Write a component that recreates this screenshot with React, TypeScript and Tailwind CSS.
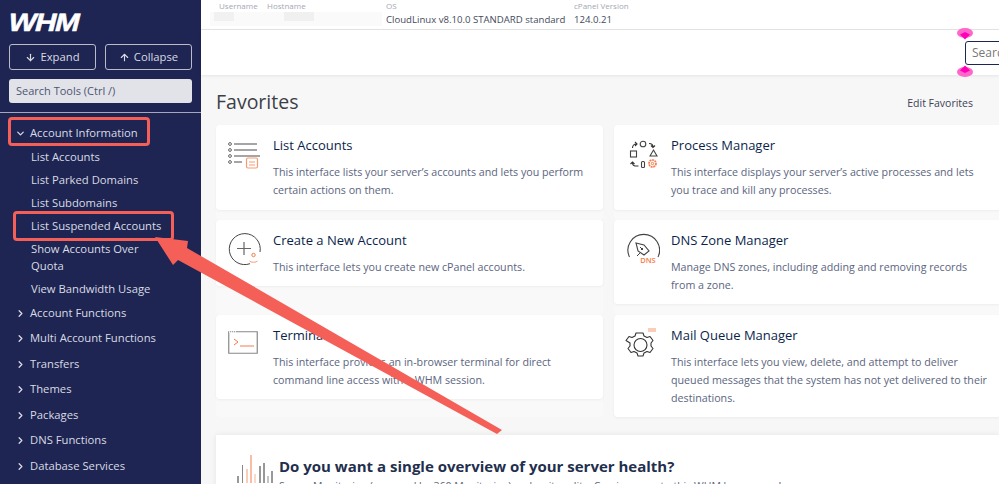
import { ArrowDown, ArrowUp, ChevronDown, ChevronRight } from 'lucide-react';
import type { ReactNode } from 'react';

const subItems = [
  { label: 'List Accounts' },
  { label: 'List Parked Domains' },
  { label: 'List Subdomains' },
  { label: 'List Suspended Accounts' },
  { label: 'Show Accounts Over Quota' },
  { label: 'View Bandwidth Usage' },
];

const groups = [
  'Account Functions',
  'Multi Account Functions',
  'Transfers',
  'Themes',
  'Packages',
  'DNS Functions',
  'Database Services',
];

function ListIcon() {
  return (
    <svg className="mt-[3px]" width="32" height="30" viewBox="0 0 32 30" fill="none">
      {[3, 9, 15, 21].map(y => (
        <circle key={y} cx="2" cy={y} r="1.4" stroke="#666" strokeWidth="1" />
      ))}
      <path d="M6 3h23M6 9h23M6 15h26M6 21h8" stroke="#888" strokeWidth="1.5" />
      <rect x="18.5" y="17" width="11" height="10" rx="1.5" fill="#fff" stroke="#f79a70" strokeWidth="1.2" />
      <path d="M21 21h6M21 24h6" stroke="#f79a70" strokeWidth="1" />
    </svg>
  );
}

function PlusIcon() {
  return (
    <svg width="34" height="34" viewBox="0 0 34 34" fill="none">
      <path d="M22 30.7A15.5 15.5 0 1 1 32 19" stroke="#444" strokeWidth="1" />
      <path d="M16 9v13M9 15.5h14" stroke="#666" strokeWidth="1.2" />
      <circle cx="25.5" cy="22" r="1.7" stroke="#f47b4a" strokeWidth="1" />
      <path d="M21.5 28c1 1.7 7 1.7 8 0" stroke="#f79a70" strokeWidth="1" />
    </svg>
  );
}

function TerminalIcon() {
  return (
    <svg className="mt-[3px]" width="30" height="24" viewBox="0 0 30 24" fill="none">
      <path d="M.75.75h28.500v21.500H.75z" stroke="#888" strokeWidth="1.200" />
      <path d="M1 1h7" stroke="#fff" strokeWidth="1.500" strokeDasharray="1 1" />
      <path d="M6 8l4 3-4 3" stroke="#f47b4a" strokeWidth="1" />
      <path d="M12 15h14" stroke="#f47b4a" strokeWidth="1" />
    </svg>
  );
}

function ProcessIcon() {
  return (
    <svg className="ml-[3px] mt-[2px]" width="30" height="30" viewBox="0 0 30 30" fill="none">
      <circle cx="14" cy="4" r="2.800" stroke="#444" strokeWidth="1.100" />
      <rect x="1.500" y="11" width="6" height="6" stroke="#444" strokeWidth="1.100" />
      <path d="M21 16l3.500-6 3.500 6h-7z" stroke="#444" strokeWidth="1.100" />
      <rect x="12.500" y="21.500" width="3" height="6" rx="1" stroke="#444" strokeWidth="1.100" />
      <circle cx="23.500" cy="23.500" r="3.500" stroke="#f47b4a" strokeWidth="1.700" strokeDasharray="2 .6" />
      <circle cx="23.500" cy="23.500" r="1.200" stroke="#f47b4a" strokeWidth="1" />
      <path d="M3.500 8c0-2.500 1.500-4 4-4M6 2l2 2-2 2" stroke="#333" strokeWidth="1.100" />
      <path d="M20 3.500c2.500 0 4 1.500 4 3.500M22 5.500l2 2 2-2" stroke="#333" strokeWidth="1.100" />
      <path d="M9.500 26H6.500c-2 0-3-1-3-3.500M5.500 24l-2-2-2 2" stroke="#333" strokeWidth="1.100" />
    </svg>
  );
}

function DnsIcon() {
  return (
    <svg width="34" height="34" viewBox="0 0 34 34" fill="none">
      <path d="M3.500 24A15.800 15.800 0 1 1 32 24" stroke="#444" strokeWidth="1.100" />
      <path d="M10 10l8 2 5 6-5 4-6-4-2-8z" stroke="#444" strokeWidth="1.100" />
      <path d="M14 14l3 3M15 17l2-2M11 23l3-3" stroke="#444" strokeWidth="1" />
      <text x="22" y="30" textAnchor="middle" fontSize="7.500" fontWeight="600" fill="#f47b4a" fontFamily="'Open Sans', sans-serif">DNS</text>
    </svg>
  );
}

function MailGearIcon() {
  return (
    <svg className="-mt-[1px] ml-[-1px]" width="33" height="34" viewBox="0 0 33 34" fill="none">
      <path d="M23 2h8M23 4h8" stroke="#f79a70" strokeWidth="1" />
      <path d="M13 6h5l1 3 3 1.500 3-1 3 4-2 2.500v3l2 2.500-3 4-3-1-3 1.500-1 3h-5l-1-3-3-1.500-3 1-3-4 2-2.500v-3L1 13.500l3-4 3 1 3-1.500 1-3z" stroke="#333" strokeWidth="1.100" strokeLinejoin="round" />
      <circle cx="15.500" cy="18" r="6.500" stroke="#333" strokeWidth="1.100" />
    </svg>
  );
}

function BarsIcon() {
  const bars = [
    { x: 1, h: 7, c: '#333' }, { x: 5.5, h: 18, c: '#888' }, { x: 10, h: 14, c: '#f79a70' },
    { x: 14, h: 28, c: '#f47b4a' }, { x: 18, h: 9, c: '#f7b199' }, { x: 23, h: 17, c: '#333' },
    { x: 27, h: 20, c: '#333' }, { x: 31, h: 7, c: '#888' }, { x: 35, h: 12, c: '#333' },
  ];
  return (
    <svg width="37" height="28" viewBox="0 0 37 28" fill="none">
      {bars.map(b => (
        <path key={b.x} d={`M${b.x} 28v-${b.h}`} stroke={b.c} strokeWidth="1" />
      ))}
    </svg>
  );
}

function Card({ icon, title, children, cardH, whiteH }: { icon: ReactNode; title: string; children: ReactNode; cardH: string; whiteH: string }) {
  return (
    <div className={`bg-[#f9f9f9] rounded ${cardH}`}>
      <div className={`flex bg-white rounded shadow-[0_1px_3px_rgba(0,0,0,0.05)] ${whiteH}`}>
        <div className="w-[57px] shrink-0 pl-[12px] pt-[13px]">{icon}</div>
        <div className="pt-[10px] pr-[12px]">
          <h3 className="text-[13px] leading-[20px] text-[#0c1f4c] font-normal">{title}</h3>
          <p className="mt-[8px] text-[10.700px] leading-[18px] text-[#5b6580]">{children}</p>
        </div>
      </div>
    </div>
  );
}

export default function App() {
  return (
    <div className="relative flex h-[484px] w-[999px] overflow-hidden bg-[#f7f7f7] font-['Open_Sans',sans-serif]">
      <aside className="w-[201px] shrink-0 bg-[#1e2552] text-[#d9dbe4]">
        <div className="h-[44px] pl-[9px] pt-[7px]">
          <span className="block origin-left -skew-x-12 scale-x-[1.180] font-['Liberation_Sans',sans-serif] text-[25px] leading-[30px] font-bold tracking-[-1px] text-white [-webkit-text-stroke:0.5px_white]">WHM</span>
        </div>
        <div className="flex gap-[9px] px-[9px]">
          <button className="flex h-[26px] w-[87px] items-center justify-center gap-[4px] rounded-[3px] border border-[#b9bccb] text-[11.250px]">
            <ArrowDown size={11} strokeWidth={2.500} />Expand
          </button>
          <button className="flex h-[26px] w-[87px] items-center justify-center gap-[4px] rounded-[3px] border border-[#b9bccb] text-[11.250px]">
            <ArrowUp size={11} strokeWidth={2.500} />Collapse
          </button>
        </div>
        <div className="mx-[9px] mt-[9px] flex h-[24px] items-center rounded-[3px] bg-[#e2e3e8] px-[7px] text-[11px] text-[#4d5573]">
          Search Tools (Ctrl /)
        </div>
        <div className="mt-[9px] border-t border-[#a5a8ba]" />
        <nav className="pt-[8px] text-[11.250px]">
          <div className="flex h-[24px] items-center gap-[4px] pl-[15px]">
            <ChevronDown size={11} strokeWidth={2.750} />
            Account Information
          </div>
          <ul className="mb-[0.500px]">
            {subItems.map(item => (
              <li key={item.label} className="w-[165px] py-[3px] pl-[31px] leading-[17px]">{item.label}</li>
            ))}
          </ul>
          {groups.map(g => (
            <div key={g} className="flex h-[25.500px] items-center gap-[4px] pl-[15px]">
              <ChevronRight size={11} strokeWidth={2.750} />
              {g}
            </div>
          ))}
        </nav>
      </aside>

      <main className="min-w-0 flex-1">
        <div className="flex h-[30px] border-b border-[#e5e5e5] bg-white whitespace-nowrap">
          <div className="w-[18px]" />
          <div className="w-[48px] text-[8px] leading-[11px] text-[#a3a8b4]">Username</div>
          <div className="w-[119px] text-[8px] leading-[11px] text-[#a3a8b4]">Hostname</div>
          <div className="w-[188px]">
            <div className="text-[8px] leading-[11px] text-[#a3a8b4]">OS</div>
            <div className="mt-[1px] text-[9.600px] leading-[15px] text-[#444b5c]">CloudLinux v8.10.0 STANDARD standard</div>
          </div>
          <div>
            <div className="text-[8px] leading-[11px] text-[#a3a8b4]">cPanel Version</div>
            <div className="mt-[1px] text-[9.600px] leading-[15px] text-[#444b5c]">124.0.21</div>
          </div>
        </div>
        <div className="h-[45px] bg-white shadow-[0_1px_3px_rgba(0,0,0,0.08)]" />

        <div className="pl-[15px]">
          <div className="flex h-[50px] items-center justify-between pr-[26px] pt-[4px]">
            <h1 className="text-[19.500px] font-normal text-[#3c3f46]">Favorites</h1>
            <span className="mt-[4px] text-[10.500px] text-[#3a4256]">Edit Favorites</span>
          </div>
          <div className="grid grid-cols-[387px_387px] gap-x-[11px]">
            <Card cardH="h-[95px]" whiteH="h-[85px]" icon={<ListIcon />} title="List Accounts">
              This interface lists your server’s accounts and lets you perform certain actions on them.
            </Card>
            <Card cardH="h-[95px]" whiteH="h-[85px]" icon={<ProcessIcon />} title="Process Manager">
              This interface displays your server’s active processes and lets you trace and kill any processes.
            </Card>
            <Card cardH="h-[95px]" whiteH="h-[66px]" icon={<PlusIcon />} title="Create a New Account">
              This interface lets you create new cPanel accounts.
            </Card>
            <Card cardH="h-[95px]" whiteH="h-[84px]" icon={<DnsIcon />} title="DNS Zone Manager">
              Manage DNS zones, including adding and removing records from a zone.
            </Card>
            <Card cardH="h-[102px]" whiteH="h-[84px]" icon={<TerminalIcon />} title="Terminal">
              This interface provides an in-browser terminal for direct command line access with a WHM session.
            </Card>
            <Card cardH="h-[102px]" whiteH="h-[102px]" icon={<MailGearIcon />} title="Mail Queue Manager">
              This interface lets you view, delete, and attempt to deliver queued messages that the system has not yet delivered to their destinations.
            </Card>
          </div>
          <div className="mt-[18px] flex h-[80px] bg-white pl-[21px] pt-[20px] shadow-[0_0_6px_rgba(0,0,0,0.08)]">
            <div className="w-[42px] shrink-0"><BarsIcon /></div>
            <div className="whitespace-nowrap">
              <h2 className="text-[15px] leading-[22px] font-bold text-[#1f2f4d]">Do you want a single overview of your server health?</h2>
              <p className="text-[10.500px] leading-[18px] text-[#5b6580]">Server Monitoring (powered by 360 Monitoring) makes it reality. Coming soon to this WHM home page!</p>
            </div>
          </div>
        </div>
      </main>

      {/* blurred out user + host values */}
      <div className="absolute left-[210px] top-[12px] flex h-[14px] w-[172px] bg-[#fafafa]">
        <div className="ml-[4px] h-[9px] w-[20px] bg-[#f1f1f1]" />
        <div className="ml-[50px] h-[9px] w-[30px] bg-[#f0f0f0]" />
      </div>

      {/* cut off search box with its pink drag handles */}
      <div className="absolute left-[965px] top-[41px] flex h-[24px] w-[60px] items-center rounded-[3px] border border-[#1e2552] bg-white pl-[6px] text-[12px] text-[#777]">
        Search
      </div>
      <svg className="absolute left-[957px] top-[28px]" width="16" height="12" viewBox="0 0 16 12">
        <ellipse cx="8" cy="5" rx="8" ry="5" fill="#ff66cc" />
        <path d="M3 6.500L8 4l5 2.500L8 11.500z" fill="#ff00b8" />
      </svg>
      <svg className="absolute left-[957px] top-[65px]" width="16" height="12" viewBox="0 0 16 12">
        <ellipse cx="8" cy="7" rx="8" ry="5" fill="#ff66cc" />
        <path d="M3 5.500L8 .5l5 5L8 8z" fill="#ff00b8" />
      </svg>

      {/* annotations over the screenshot */}
      <div className="absolute left-[8px] top-[117px] h-[29px] w-[142px] rounded-[4px] border-[3px] border-[#f45f58]" />
      <div className="absolute left-[13px] top-[211px] h-[30px] w-[161px] rounded-[4px] border-[3px] border-[#f45f58]" />
      <svg className="absolute left-0 top-0" width="999" height="484" fill="none">
        <polygon points="155,237 188,241 187,248 502,430 497,434 178,260 173,265" fill="#f45f58" />
      </svg>
    </div>
  );
}
